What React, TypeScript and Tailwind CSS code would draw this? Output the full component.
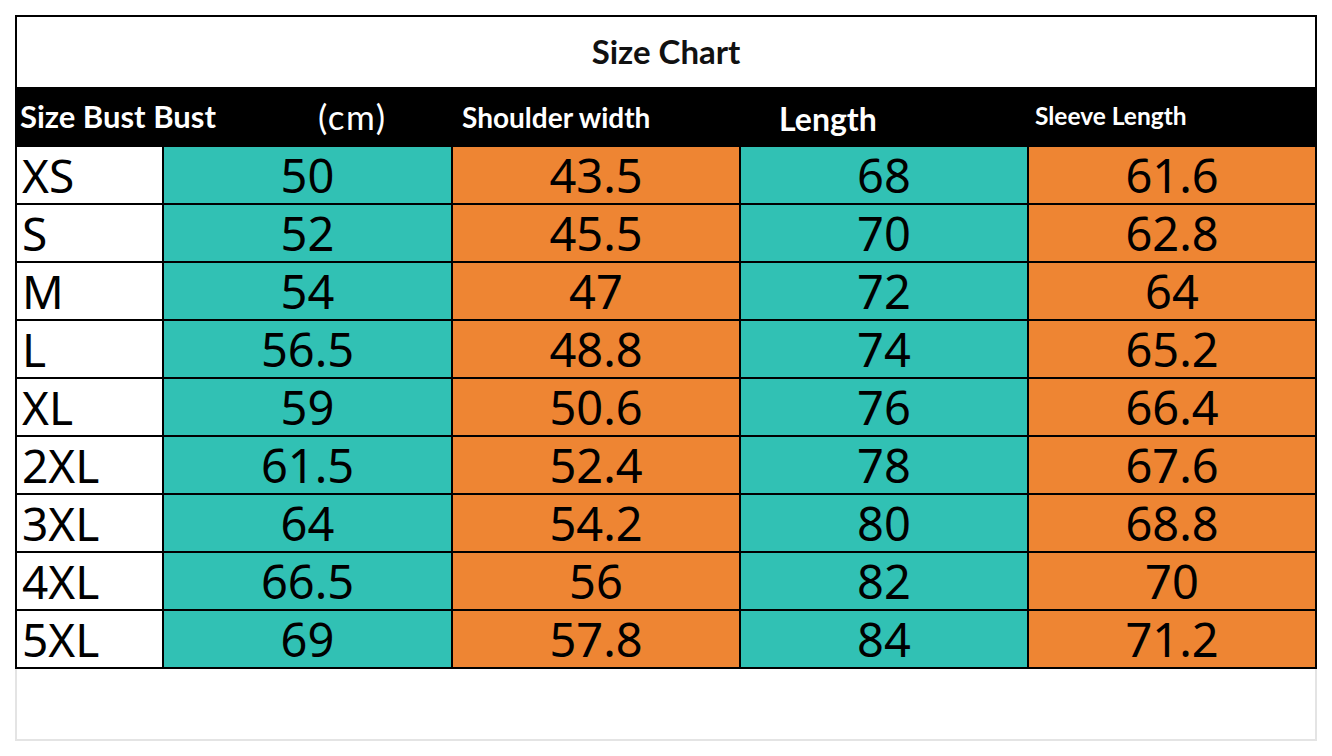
const rows: [string, string, string, string, string][] = [
  ["XS", "50", "43.5", "68", "61.6"],
  ["S", "52", "45.5", "70", "62.8"],
  ["M", "54", "47", "72", "64"],
  ["L", "56.5", "48.8", "74", "65.2"],
  ["XL", "59", "50.6", "76", "66.4"],
  ["2XL", "61.5", "52.4", "78", "67.6"],
  ["3XL", "64", "54.2", "80", "68.8"],
  ["4XL", "66.5", "56", "82", "70"],
  ["5XL", "69", "57.8", "84", "71.2"],
];

const cellColors = ["bg-[#31c1b4]", "bg-[#ee8533]", "bg-[#31c1b4]", "bg-[#ee8533]"];

export default function App() {
  return (
    <div className="min-h-screen bg-white pl-[15px] pt-[15px]">
      <div className="w-[1302px]">
        <div className="border-2 border-black bg-black">
          <div className="flex h-[70px] items-center justify-center bg-white font-['Lato',sans-serif] text-[33px] font-bold text-[#111]">
            Size Chart
          </div>

          <div className="grid h-[59px] grid-cols-[145px_289px_288px_288px_288px] items-center bg-black font-['Lato',sans-serif] text-white">
            <div className="col-span-2 flex items-center">
              <span className="pl-[3px] text-[31px] font-bold">Size Bust Bust</span>
              <span className="ml-[102px] text-[35px] tracking-[1.5px]">(cm)</span>
            </div>
            <div className="pl-[11px] text-[28px] font-bold">Shoulder width</div>
            <div className="pl-[40px] pt-[4px] text-[32px] font-bold">Length</div>
            <div className="pl-[8px] text-[24.5px] font-bold">Sleeve Length</div>
          </div>

          <div className="grid grid-cols-[145px_287px_286px_286px_286px] gap-[2px] pt-[1px] font-['Noto_Sans',sans-serif] text-black">
            {rows.map((row) => (
              <div key={row[0]} className="contents">
                <div className="flex h-[56px] items-center bg-white pl-[5px] text-[46px] leading-none">
                  {row[0]}
                </div>
                {row.slice(1).map((value, i) => (
                  <div
                    key={i}
                    className={`flex h-[56px] items-center justify-center text-[47px] leading-none ${cellColors[i]}`}
                  >
                    {value}
                  </div>
                ))}
              </div>
            ))}
          </div>
        </div>
        <div className="h-[72px] border-x-2 border-b-2 border-[#e4e4e4]" />
      </div>
    </div>
  );
}
